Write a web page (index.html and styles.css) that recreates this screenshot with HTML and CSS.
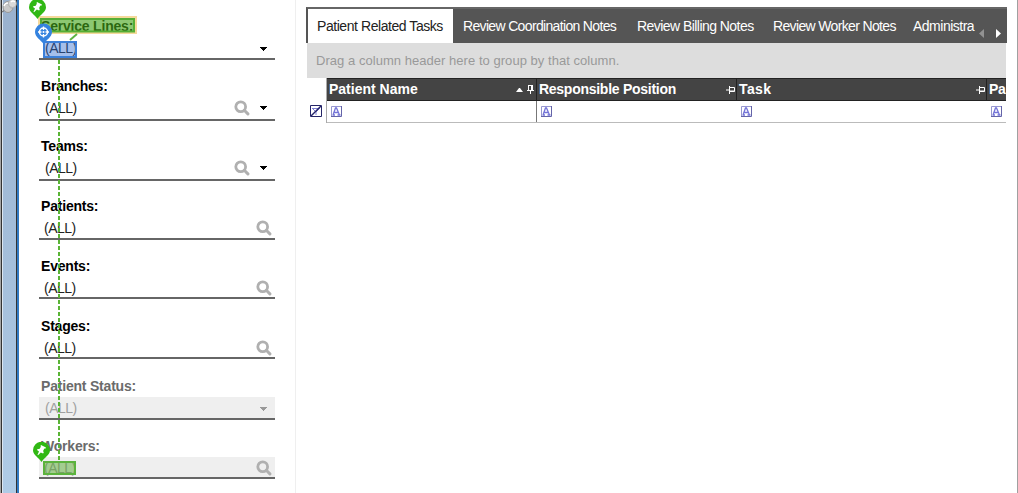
FILE: index.html
```html
<!DOCTYPE html>
<html lang="en">
<head>
<meta charset="utf-8">
<title>Patient Related Tasks</title>
<link rel="stylesheet" href="styles.css">
</head>
<body>
<svg class="defs" width="0" height="0">
  <symbol id="search" viewBox="0 0 16 16"><circle cx="6.700" cy="6.700" r="4.900" fill="none" stroke="currentColor" stroke-width="2.800"/><path d="M10.300 10.300l3.600 3.600" stroke="currentColor" stroke-width="3" stroke-linecap="round"/></symbol>
  <symbol id="down" viewBox="0 0 7 4"><path d="M0 0h7v1h-1v1h-1v1h-1v1h-1v-1h-1v-1h-1v-1h-1z" fill="currentColor"/></symbol>
  <symbol id="letter" viewBox="0 0 11 11"><path d="M.5 10.500V.5H10.500" fill="none" stroke="#9696cf"/><path d="M10.500 0v10.500H0" fill="none" stroke="#6464a8"/><path d="M2 9L4.500 2h1L8.500 9M3.500 6.500h4M1.500 9h2.500M6.500 9h3" fill="none" stroke="#7474d8" stroke-width="1.300"/></symbol>
  <symbol id="pin" viewBox="0 0 9 8"><path d="M0 4h3M3.500 0v8M3.500 1.500h5v4h-5M3.500 5h5" fill="none" stroke="#fff"/></symbol>
  <symbol id="pin-down" viewBox="0 0 8 9"><path d="M1.500 0v5.500M5.500 0v5.500M1.500.5h4M4.500.5v5M0 5.500h7M3.500 6v3" fill="none" stroke="#fff"/></symbol>
  <symbol id="marker" viewBox="0 0 17 20"><path d="M8.500 20C6 16 0 13 0 8.300a8.500 8.500 0 0 1 17 0C17 13 11 16 8.500 20z" fill="#31b814"/><path d="M8 3l5 2.500-.7 1.200-1-.1-1.200 2.300.7 1.700-.7 1-2.300-1.200L5 13.200l-.5-.4 1.500-3.400-2-1.300.6-1.100 1.800-.1 1.500-2.200-.4-.7z" fill="#fff"/></symbol>
</svg>
<main class="app">
  <aside class="rail">
    <div class="rail-body">
      <svg class="thumbtack" width="16" height="15" viewBox="0 0 16 15"><path d="M1 12l3-2" stroke="#777" stroke-width="1.500"/><ellipse cx="7" cy="7" rx="5" ry="5.500" fill="#c9c9c9" stroke="#999"/><path d="M5 3L10 0l5 2v4l-5 3z" fill="#b8b8b8"/><circle cx="11.500" cy="3.500" r="4" fill="#d9d9d9" stroke="#aaa" stroke-width=".7"/><path d="M3 6q1-3 4-3M10 2q2-2 4 0" fill="none" stroke="#fff" stroke-width="1.500"/></svg>
    </div>
  </aside>
  <section class="filters">
    <div class="field"><label class="label">Service Lines:</label><div class="control"><span class="value">(ALL)</span><svg class="arrow"><use href="#down"/></svg></div></div>
    <div class="field"><label class="label">Branches:</label><div class="control tall"><span class="value">(ALL)</span><svg class="search"><use href="#search"/></svg><svg class="arrow"><use href="#down"/></svg></div></div>
    <div class="field"><label class="label">Teams:</label><div class="control tall"><span class="value">(ALL)</span><svg class="search"><use href="#search"/></svg><svg class="arrow"><use href="#down"/></svg></div></div>
    <div class="field"><label class="label">Patients:</label><div class="control lookup"><span class="value">(ALL)</span><svg class="search"><use href="#search"/></svg></div></div>
    <div class="field"><label class="label">Events:</label><div class="control lookup short"><span class="value">(ALL)</span><svg class="search"><use href="#search"/></svg></div></div>
    <div class="field"><label class="label">Stages:</label><div class="control lookup short"><span class="value">(ALL)</span><svg class="search"><use href="#search"/></svg></div></div>
    <div class="field disabled"><label class="label">Patient Status:</label><div class="control"><span class="value">(ALL)</span><svg class="arrow"><use href="#down"/></svg></div></div>
    <div class="field disabled"><label class="label">Workers:</label><div class="control lookup short"><span class="value">(ALL)</span><svg class="search"><use href="#search"/></svg></div></div>
  </section>
  <section class="content">
    <nav class="tabs">
      <div class="tab active"><span>Patient Related Tasks</span></div>
      <div class="tab w2"><span>Review Coordination Notes</span></div>
      <div class="tab w3"><span>Review Billing Notes</span></div>
      <div class="tab w4"><span>Review Worker Notes</span></div>
      <div class="tab last"><span>Administra</span></div>
      <svg class="scroll" width="28" height="34" viewBox="0 0 28 34"><path d="M10 20v9L5 24.500z" fill="#929292"/><path d="M22 20v9l5-4.500z" fill="#fff"/></svg>
    </nav>
    <div class="groupbar"><span>Drag a column header here to group by that column.</span></div>
    <div class="grid">
      <div class="gutter"><svg width="12" height="12" viewBox="0 0 12 12"><path d="M.5.5h11v11H.5z" fill="#fff" stroke="#252568"/><path d="M2 3.500h8M3 4l3 3v3M9 4L6 7" fill="none" stroke="#8080d5"/><path d="M1 11L11 1" stroke="#252568" stroke-width="1.400"/></svg></div>
      <div class="table">
        <div class="row head">
          <div class="cell"><span>Patient Name</span><svg class="sort" width="7" height="4"><path d="M0 4L3 0h1l3 4z" fill="#fff"/></svg><svg class="pin-down" width="8" height="9"><use href="#pin-down"/></svg></div>
          <div class="cell"><span class="position">Responsible Position</span><svg class="pin" width="9" height="8"><use href="#pin"/></svg></div>
          <div class="cell"><span class="task">Task</span><svg class="pin" width="9" height="8"><use href="#pin"/></svg></div>
          <div class="cell"><span>Pa</span></div>
        </div>
        <div class="row filter">
          <div class="cell"><svg class="letter"><use href="#letter"/></svg></div>
          <div class="cell"><svg class="letter"><use href="#letter"/></svg></div>
          <div class="cell"><svg class="letter"><use href="#letter"/></svg></div>
          <div class="cell"><svg class="letter"><use href="#letter"/></svg></div>
        </div>
      </div>
    </div>
  </section>
  <svg class="annotations" width="150" height="493" viewBox="0 0 150 493">
    <rect x="39" y="17" width="97" height="16" fill="none" stroke="#f5d99b" stroke-width="2"/>
    <rect x="41" y="19" width="93" height="12.500" fill="#46a51c" fill-opacity=".62" stroke="#55ae35" stroke-width="2"/>
    <path d="M77 34l-7 6" stroke="#5eb441" stroke-width="2"/>
    <rect x="44" y="42" width="32" height="15" fill="#326ed2" fill-opacity=".44" stroke="#3c80d9" stroke-width="2"/>
    <path d="M59 60v400" stroke="#5ab436" stroke-width="2" stroke-dasharray="4 2"/>
    <rect x="44" y="462" width="31" height="12" fill="#46a51c" fill-opacity=".45" stroke="#5bb33d" stroke-width="2"/>
    <use href="#marker" x="29" y="-1" width="17" height="20"/>
    <use href="#marker" x="33" y="442" width="17" height="20"/>
    <path d="M43.500 44C41 40 35 37 35 32a8.500 8.500 0 0 1 17 0C52 37 46 40 43.500 44z" fill="#3583df"/>
    <circle cx="43.500" cy="32" r="4" fill="none" stroke="#fff" stroke-width="1.500"/><path d="M43.500 26.500v3.500M43.500 34v3.500M38 32h3.500M45.500 32H49" stroke="#fff" stroke-width="1.300"/><circle cx="43.500" cy="32" r="1" fill="#fff"/>
  </svg>
</main>
</body>
</html>
```

FILE: styles.css
```css
* { box-sizing: border-box; }
body { margin: 0; background: #fff; font: 13px/16px "Liberation Sans", Arial, sans-serif; color: #000; }
svg { display: block; flex: none; }
.defs { position: absolute; }
.app { position: relative; display: flex; width: 1018px; height: 493px; overflow: hidden; border-right: 1px solid #a0a0a0; }
.rail { width: 19px; flex: none; padding-left: 1px; background: #a5a5a5; border-right: 2px solid #3179c2; }
.rail-body { height: 100%; border-left: 1px solid #333; border-right: 1px solid #333; background: linear-gradient(#99b1ce, #afcbe6); box-shadow: inset 1px 0 #dce6f0; }
.thumbtack { margin-left: -1px; }
.filters { width: 277px; flex: none; padding: 18px 20px 0; border-right: 1px solid #efefef; }
.field { height: 60px; }
.label { display: block; height: 19px; padding-left: 2px; font-size: 14px; font-weight: 700; white-space: nowrap; letter-spacing: -.2px; }
.control { height: 23px; width: 236px; display: flex; align-items: flex-start; border-bottom: 2px solid #666; padding: 3px 8px 0 6px; }
.control.tall { height: 24px; }
.control.short { height: 22px; }
.control.lookup { padding-left: 5px; padding-right: 3px; }
.value { font-size: 14px; letter-spacing: -.5px; margin-right: auto; color: #222; }
.search { width: 16px; height: 16px; color: #b0b0b0; }
.arrow { width: 7px; height: 4px; margin: 7px 0 0 10px; }
.tall .arrow { margin-top: 6px; }
.field .control .arrow { color: #000; }
.disabled .label { color: #6b6b6b; }
.disabled .control { background: #efefef; }
.disabled .value { color: #a0a0a0; }
.disabled .control .arrow { color: #999; }
.content { width: 701px; margin: 7px 0 0 10px; flex: none; }
.tabs { position: relative; height: 36px; display: flex; overflow: hidden; background: #555; border-top: 2px solid #666; border-left: 2px solid #555; color: #fff; font-size: 14px; line-height: 34px; white-space: nowrap; }
.tab { flex: none; padding-left: 10px; letter-spacing: -.55px; }
.tab.active { width: 145px; background: #fff; color: #222; padding-left: 9px; letter-spacing: -.44px; }
.w2 { width: 174px; letter-spacing: -.66px; }
.w3 { width: 136px; }
.w4 { width: 140px; letter-spacing: -.65px; }
.tab.last { width: 71px; letter-spacing: -.5px; }
.groupbar { height: 35px; margin: 0 1px; padding-left: 9px; background: #ddd; color: #999; line-height: 35px; white-space: nowrap; }
.groupbar span { letter-spacing: .04px; }
.grid { display: flex; margin: 0 1px; }
.gutter { width: 19px; padding: 27px 0 0 3px; flex: none; }
.table { flex: 1; min-width: 0; overflow: hidden; border-left: 1px solid #aaa; }
.row { display: grid; grid-template-columns: 210px 200px 250px 19px; }
.head { height: 23px; background: #444; border-top: 1px solid #222; border-bottom: 1px solid #222; color: #fff; font-weight: 700; font-size: 14px; line-height: 21px; }
.cell { display: flex; align-items: center; border-right: 1px solid #222; padding-left: 2px; white-space: nowrap; }
.cell:last-child { border-right: 0; }
.head .cell:last-child { letter-spacing: -.3px; }
.position { letter-spacing: -.27px; }
.task { letter-spacing: .4px; }
.pin { margin-left: auto; margin-right: 1px; }
.sort { margin-left: auto; margin-right: 4px; }
.pin-down { margin-right: 1px; }
.filter { height: 22px; border-bottom: 1px solid #bbb; }
.filter .cell { border-right: 0; padding-left: 4px; }
.filter .cell:first-child { border-right: 1px solid #777; }
.letter { width: 11px; height: 11px; }
.annotations { position: absolute; left: 0; top: 0; }
```
